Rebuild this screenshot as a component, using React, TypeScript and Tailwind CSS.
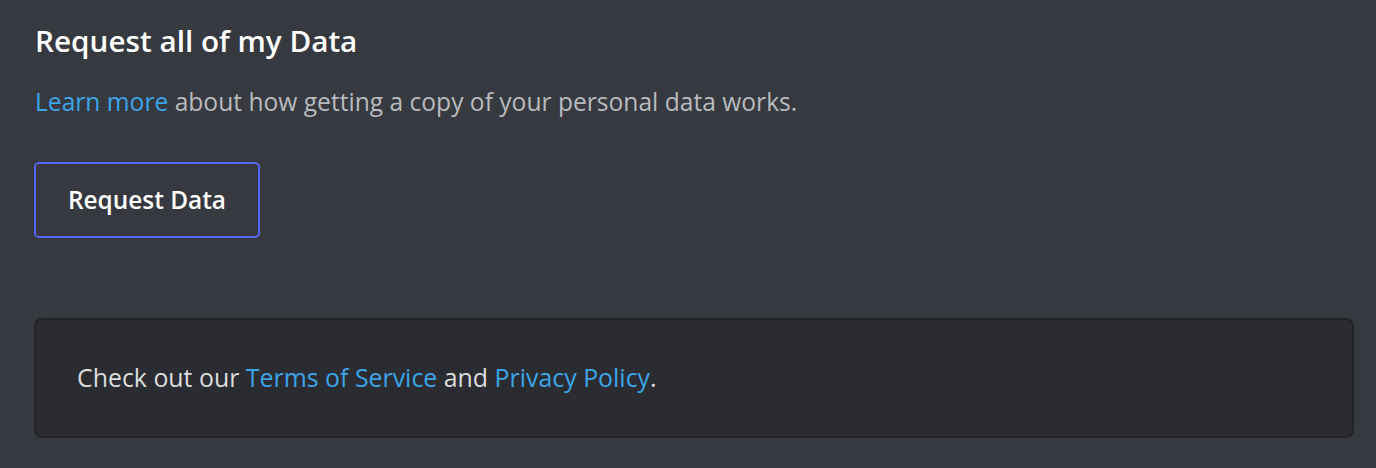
export default function App() {
  return (
    <div className="min-h-screen w-full bg-[#36393f] pl-[34px] pr-[22px] pt-[21px] font-['Open_Sans',sans-serif]">
      <h2 className="text-[29.7px] leading-[40px] font-semibold text-white pl-px">Request all of my Data</h2>
      <p className="mt-[25px] text-[24.6px] leading-[32px] text-[#b9bbbe] pl-px">
        <a className="text-[#3ba5e8]">Learn more</a> about how getting a copy of your personal data works.
      </p>
      <button className="mt-[44px] flex h-[76px] w-[226px] items-center justify-center rounded-[5px] border-2 border-[#5865f2] text-[24.4px] font-semibold text-white">
        Request Data
      </button>
      <div className="mt-[80px] flex h-[120px] items-center rounded-[8px] border-2 border-[#232428] bg-[#2b2c31] px-[41px] text-[24.9px] text-[#dcddde]">
        <span>
          Check out our <a className="text-[#3ba5e8]">Terms of Service</a> and{" "}
          <a className="text-[#3ba5e8]">Privacy Policy</a>.
        </span>
      </div>
    </div>
  );
}
